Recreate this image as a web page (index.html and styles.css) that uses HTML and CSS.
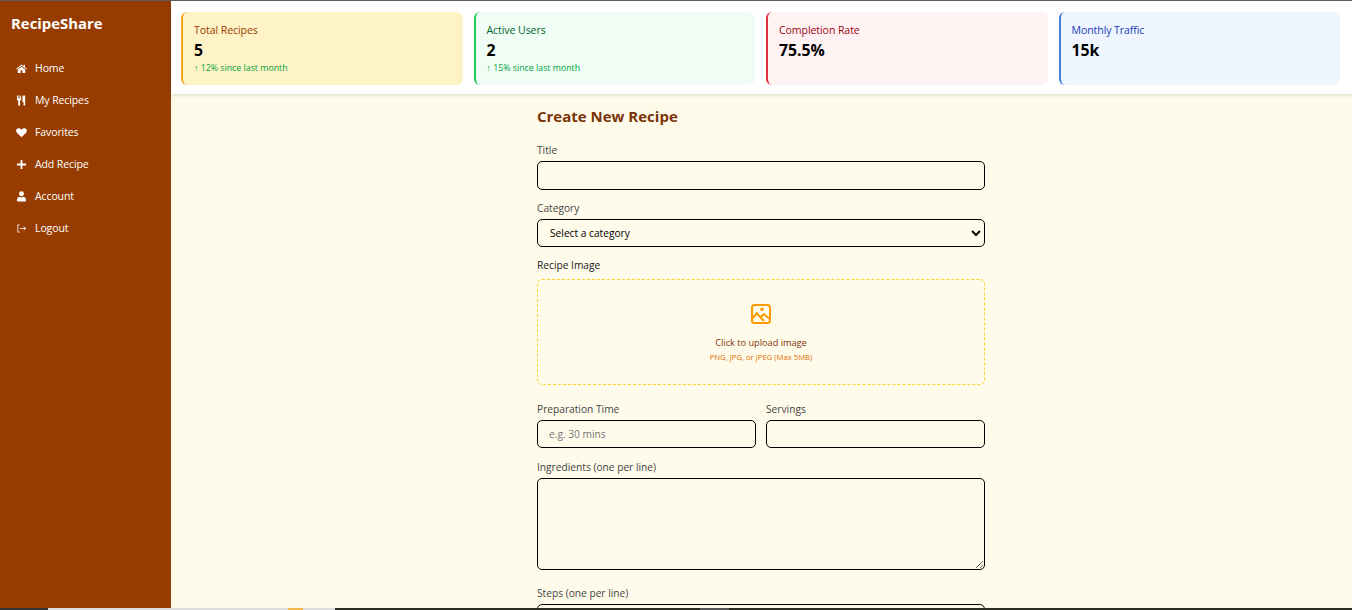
FILE: index.html
```html
<!DOCTYPE html>
<html lang="en">
<head>
<meta charset="utf-8">
<title>RecipeShare</title>
<link rel="stylesheet" href="styles.css">
</head>
<body>
<div class="app">
  <aside class="sidebar">
    <h1 class="brand">RecipeShare</h1>
    <nav class="nav">
      <a class="nav-item"><svg class="nav-icon" viewBox="0 0 12 12"><path d="M6 1.600 .2 6.400l.7.8L6 3l5.100 4.200.7-.8-2.100-1.700V2H8.300v1.500zM1.900 7.400V11H5V8h2v3h3.100V7.400L6 4z"/></svg>Home</a>
      <a class="nav-item"><svg class="nav-icon" viewBox="0 0 12 12"><path d="M1 .5h1v3.300h.8V.5h1v3.300h.8V.5h1v4.200c0 .8-.6 1.400-1.300 1.500l.3 5.300H2.300l.3-5.300C1.600 6.100 1 5.500 1 4.700zM8 .5h2v11H8.200V7.500H7V3.500C7 1.800 7.300.5 8 .5z"/></svg>My Recipes</a>
      <a class="nav-item"><svg class="nav-icon" viewBox="0 0 12 12"><path d="M6 11.200 1 6.300C-.8 4.200.4 1.300 3 1.300c1.300 0 2.300.7 3 1.700.7-1 1.700-1.700 3-1.700 2.600 0 3.800 2.900 2 5z"/></svg>Favorites</a>
      <a class="nav-item"><svg class="nav-icon" viewBox="0 0 12 12"><path d="M5 1h2v4h4v2H7v4H5V7H1V5h4z"/></svg>Add Recipe</a>
      <a class="nav-item"><svg class="nav-icon" viewBox="0 0 12 12"><circle cx="6" cy="3" r="2.700"/><path d="M1.800 11.500c-.5 0-.8-.3-.8-.8C1 8.200 2 6.500 3.400 6.200c1.600 1 3.600 1 5.200 0C10 6.500 11 8.200 11 10.700c0 .5-.3.8-.8.8z"/></svg>Account</a>
      <a class="nav-item"><svg class="nav-icon nav-icon-line" viewBox="0 0 12 12"><path d="M4 2H2v8h2M4.500 6H10.500M8.500 4l2 2-2 2"/></svg>Logout</a>
    </nav>
  </aside>
  <div class="content">
    <header class="stats">
      <section class="card card-yellow">
        <div class="card-label">Total Recipes</div>
        <div class="card-value">5</div>
        <div class="card-note">↑ 12% since last month</div>
      </section>
      <section class="card card-green">
        <div class="card-label">Active Users</div>
        <div class="card-value">2</div>
        <div class="card-note">↑ 15% since last month</div>
      </section>
      <section class="card card-red">
        <div class="card-label">Completion Rate</div>
        <div class="card-value">75.5%</div>
      </section>
      <section class="card card-blue">
        <div class="card-label">Monthly Traffic</div>
        <div class="card-value">15k</div>
      </section>
    </header>
    <main class="main">
      <form class="form">
        <h2 class="form-title">Create New Recipe</h2>
        <label class="field">
          <span class="label">Title</span>
          <input class="control" type="text">
        </label>
        <label class="field">
          <span class="label">Category</span>
          <select class="control control-select"><option>Select a category</option></select>
        </label>
        <div class="field field-image">
          <span class="label label-image">Recipe Image</span>
          <div class="drop">
            <svg class="drop-icon" viewBox="0 0 22 22"><rect x="2" y="2" width="18" height="18" rx="2.500"/><path d="M2 16 6.700 10.300 14 18M10.700 13.700 14 11.300 20 16"/><circle cx="12" cy="6.300" r=".8"/></svg>
            <div class="drop-text">Click to upload image</div>
            <div class="drop-hint">PNG, JPG, or JPEG (Max 5MB)</div>
          </div>
        </div>
        <div class="row">
          <label class="field field-short">
            <span class="label">Preparation Time</span>
            <input class="control control-short" type="text" placeholder="e.g. 30 mins">
          </label>
          <label class="field field-short">
            <span class="label">Servings</span>
            <input class="control control-short" type="text">
          </label>
        </div>
        <label class="field field-area">
          <span class="label">Ingredients (one per line)</span>
          <textarea class="control control-area"></textarea>
        </label>
        <label class="field field-area">
          <span class="label">Steps (one per line)</span>
          <textarea class="control control-area"></textarea>
        </label>
      </form>
    </main>
  </div>
</div>
<div class="taskbar"><span class="tb tb-a"></span><span class="tb tb-b"></span><span class="tb tb-c"></span><span class="tb tb-d"></span><span class="tb tb-e"></span><span class="tb tb-f"></span></div>
</body>
</html>
```
FILE: styles.css
```css
* { box-sizing: border-box; }
html, body { height: 100%; }
body {
  margin: 0;
  overflow: hidden;
  border-top: 1px solid #5c5c5c;
  font-family: "Open Sans", "Noto Sans", sans-serif;
  color: #000;
  background: #fffbeb;
}
.app { display: flex; height: 100%; }
.sidebar { width: 171px; flex: none; background: #973c00; color: #fff; padding: 11px 11px; }
.brand { margin: 0 0 18px; font-size: 14.9px; line-height: 22px; font-weight: 700; }
.nav { display: flex; flex-direction: column; }
.nav-item { display: flex; align-items: center; gap: 8px; height: 32px; padding-left: 5px; font-size: 10.5px; letter-spacing: -.1px; }
.nav-icon { width: 11px; height: 11px; fill: #fff; flex: none; }
.nav-icon-line { fill: none; stroke: #fff; stroke-width: .9; }
.content { flex: 1; min-width: 0; display: flex; flex-direction: column; }
.stats {
  display: grid;
  grid-template-columns: repeat(4, 1fr);
  gap: 11px;
  height: 93px;
  flex: none;
  padding: 11px 12px 11px 10px;
  background: #fff;
  box-shadow: 0 1px 4px rgba(0,0,0,.14);
  position: relative;
}
.card { border-radius: 6px; border-left: 2px solid; padding: 11px 11px 10px; }
.card-yellow { background: #fef3c6; border-color: #f5a623; }
.card-green { background: #f0fdf4; border-color: #22c55e; }
.card-red { background: #fef2f2; border-color: #e0303f; }
.card-blue { background: #eff6ff; border-color: #3f80d8; }
.card-label { font-size: 10.6px; line-height: 15px; letter-spacing: -.1px; }
.card-yellow .card-label { color: #973c00; }
.card-green .card-label { color: #016630; }
.card-red .card-label { color: #9f0712; }
.card-blue .card-label { color: #193cb8; }
.card-value { font-size: 15.800px; line-height: 20px; font-weight: 700; margin-top: 2px; }
.card-note { font-size: 8.8px; line-height: 13px; color: #00a63e; margin-top: 2px; }
.main { flex: 1; min-height: 0; overflow: hidden; padding-right: 1px; }
.form { width: 448px; margin: 0 auto; padding-top: 11px; display: flex; flex-direction: column; }
.form-title { margin: 0 0 16px; font-size: 15px; line-height: 22px; font-weight: 700; color: #7b3306; }
.field { display: flex; flex-direction: column; margin-bottom: 11px; min-width: 0; }
.field-short { margin-bottom: 12px; }
.label { font-size: 10.2px; line-height: 15px; margin-bottom: 3px; color: #444; }
.control {
  display: block;
  width: 100%;
  height: 29px;
  border: 1px solid #000;
  border-radius: 5px;
  background: transparent;
  font-family: inherit;
  font-size: 10.2px;
  padding: 0 11px;
  color: #000;
}
.control::placeholder { color: #757575; }
.control-short { height: 28px; }
.control-select { height: 28px; padding: 0 8px; }
.field-image { margin-bottom: 17px; }
.label-image { margin-bottom: 6px; color: #222; }
.drop {
  height: 106px;
  border: 1px dashed #ffd230;
  border-radius: 5px;
  display: flex;
  flex-direction: column;
  align-items: center;
  padding-top: 23px;
}
.drop-icon { width: 22px; height: 22px; fill: none; stroke: #fe9a00; stroke-width: 2; }
.drop-text { font-size: 9.2px; line-height: 13px; color: #7b3306; margin-top: 11px; }
.drop-hint { font-size: 7.700px; line-height: 11px; color: #e17100; margin-top: 3px; }
.row { display: grid; grid-template-columns: 1fr 1fr; gap: 10px; }
.field-area { margin-bottom: 16px; }
.control-area { height: 92px; padding: 8px 11px; resize: vertical; }
.taskbar { position: fixed; left: 0; right: 0; bottom: 0; height: 2px; background: #2c2c20; display: flex; }
.tb { display: block; height: 100%; }
.tb-a { width: 48px; background: #333; }
.tb-b { width: 240px; background: #ddd; }
.tb-c { width: 15px; background: #f2b84c; }
.tb-d { width: 32px; background: #ddd; }
.tb-e { width: 365px; }
.tb-f { width: 29px; background: #555; }
```
